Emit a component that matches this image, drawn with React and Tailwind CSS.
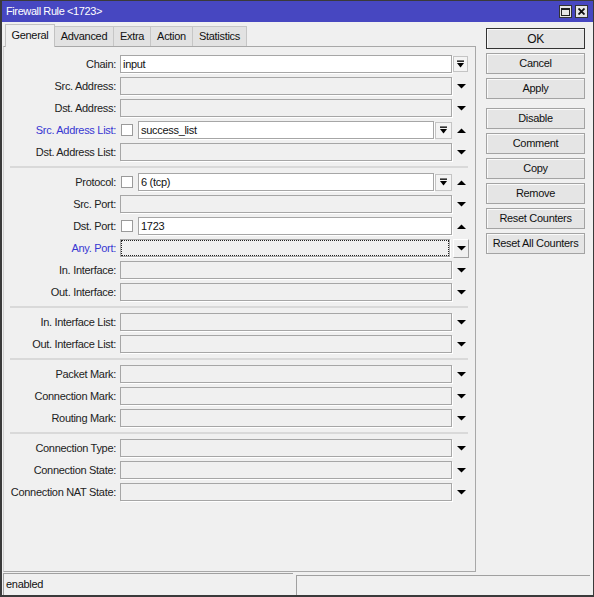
import React from 'react';

const rows = [
  { label: 'Chain:', kind: 'chain', value: 'input' },
  { label: 'Src. Address:' },
  { label: 'Dst. Address:' },
  { label: 'Src. Address List:', blue: true, kind: 'list', value: 'success_list' },
  { label: 'Dst. Address List:' },
  'sep',
  { label: 'Protocol:', kind: 'list', value: '6 (tcp)' },
  { label: 'Src. Port:' },
  { label: 'Dst. Port:', kind: 'check', value: '1723' },
  { label: 'Any. Port:', blue: true, kind: 'focus' },
  { label: 'In. Interface:' },
  { label: 'Out. Interface:' },
  'sep',
  { label: 'In. Interface List:' },
  { label: 'Out. Interface List:' },
  'sep',
  { label: 'Packet Mark:' },
  { label: 'Connection Mark:' },
  { label: 'Routing Mark:' },
  'sep',
  { label: 'Connection Type:' },
  { label: 'Connection State:' },
  { label: 'Connection NAT State:' },
];

const tabs = [
  { name: 'General', w: 'w-[50px]' },
  { name: 'Advanced', w: 'w-[59px]' },
  { name: 'Extra', w: 'w-[37px]' },
  { name: 'Action', w: 'w-[42px]' },
  { name: 'Statistics', w: 'w-[54px]' },
];

const buttons = ['OK', 'Cancel', 'Apply', null, 'Disable', 'Comment', 'Copy', 'Remove', 'Reset Counters', 'Reset All Counters'];

const Down = () => (
  <svg width="9" height="5" viewBox="0 0 9 5" className="block">
    <polygon points="0,0 9,0 4.5,4.5" fill="#000" />
  </svg>
);

const Up = () => (
  <svg width="9" height="5" viewBox="0 0 9 5" className="block">
    <polygon points="0,5 9,5 4.5,0.5" fill="#000" />
  </svg>
);

// small box with bar + down triangle
const ListBtn = ({ className }) => (
  <div className={`flex items-center justify-center bg-[#f4f4f4] border border-[#c4c4c4] ${className}`}>
    <svg width="7" height="8" viewBox="0 0 7 8" className="block">
      <rect x="0" y="0.5" width="7" height="1.3" fill="#000" />
      <polygon points="0,3 7,3 3.5,7.5" fill="#000" />
    </svg>
  </div>
);

const field = 'h-[18px] border border-[#a6a6a6] shadow-[1px_1px_0_#fff] flex items-center pl-[2px] text-[#111]';

const Row = ({ r }) => {
  const label = (
    <div className={`w-[113px] text-right pr-[1px] ${r.blue ? 'text-[#3737d2]' : 'text-[#222]'}`}>{r.label}</div>
  );
  if (r.kind === 'chain') {
    return (
      <div className="h-[22px] flex items-center">
        {label}
        <div className={`ml-[3px] w-[332px] bg-white ${field}`}>{r.value}</div>
        <ListBtn className="ml-[1px] w-[15px] h-[16px]" />
      </div>
    );
  }
  if (r.kind === 'list' || r.kind === 'check') {
    return (
      <div className="h-[22px] flex items-center">
        {label}
        <div className="ml-[4px] w-[12px] h-[12px] bg-white border border-[#9a9a9a]" />
        <div className={`ml-[5px] bg-white ${field} ${r.kind === 'list' ? 'w-[296px]' : 'w-[314px]'}`}>{r.value}</div>
        {r.kind === 'list' && <ListBtn className="ml-[1px] w-[17px] h-[17px]" />}
        <div className="ml-[5px]"><Up /></div>
      </div>
    );
  }
  if (r.kind === 'focus') {
    return (
      <div className="h-[22px] flex items-center">
        {label}
        <div className={`ml-[3px] w-[330px] bg-[#f0f0f0] ${field} outline-1 outline-dotted outline-[#222] -outline-offset-2`} />
        <div className="ml-[3px] w-[16px] h-[19px] flex items-center justify-center bg-[#f0f0f0] border border-t-white border-l-white border-r-[#a0a0a0] border-b-[#a0a0a0]">
          <Down />
        </div>
      </div>
    );
  }
  return (
    <div className="h-[22px] flex items-center">
      {label}
      <div className={`ml-[3px] w-[332px] bg-[#f0f0f0] ${field}`} />
      <div className="ml-[5px]"><Down /></div>
    </div>
  );
};

export default function App() {
  return (
    <div className="w-[594px] h-[597px] flex flex-col bg-[#f0f0f0] border-l-2 border-r border-t border-b-2 border-[#3a3a3a] font-['Liberation_Sans',Arial,sans-serif] text-[11px] tracking-[-0.3px] leading-none">
      {/* Title bar */}
      <div className="h-[21px] bg-[#4747c1] flex items-center justify-between pl-[4px] pr-[5px]">
        <span className="text-white text-[11px] tracking-[-0.4px]">Firewall Rule {'<1723>'}</span>
        <div className="flex gap-[3px]">
          <div className="w-[13px] h-[13px] bg-[#e6e6e6] border border-[#333] flex items-center justify-center">
            <div className="w-[9px] h-[8px] border border-t-2 border-[#222]" />
          </div>
          <div className="w-[13px] h-[13px] bg-[#e6e6e6] border border-[#333] flex items-center justify-center">
            <svg width="7" height="7" viewBox="0 0 7 7" className="block">
              <path d="M0.5 0.5L6.5 6.5M6.5 0.5L0.5 6.5" stroke="#111" strokeWidth="1.8" />
            </svg>
          </div>
        </div>
      </div>

      {/* Body */}
      <div className="flex-1 flex">
        <div className="w-[474px] flex flex-col">
          <div className="h-[24px] flex items-end pl-[3px]">
            {tabs.map((t, i) =>
              i === 0 ? (
                <div key={t.name} className={`${t.w} h-[23px] -mb-[1px] relative z-10 bg-[#f0f0f0] border border-b-0 border-[#c2c2c2] flex items-center justify-center text-[#111] pb-[1px]`}>
                  {t.name}
                </div>
              ) : (
                <div key={t.name} className={`${t.w} h-[20px] bg-[#e2e2e2] border border-b-0 border-l-0 border-[#c6c6c6] flex items-center justify-center text-[#111]`}>
                  {t.name}
                </div>
              )
            )}
          </div>
          <div className="ml-[1px] flex-1 border border-[#a8a8a8] border-l-[#d0d0d0] pt-[6px]">
            {rows.map((r, i) =>
              r === 'sep' ? (
                <div key={i} className="h-[8px] flex items-center pl-[6px]">
                  <div className="w-[458px] h-[2px] bg-[#d9d9d9]" />
                </div>
              ) : (
                <Row key={i} r={r} />
              )
            )}
          </div>
        </div>

        {/* Right buttons */}
        <div className="flex-1 pl-[10px] pt-[6px] flex flex-col gap-[4px]">
          {buttons.map((b, i) =>
            b === null ? (
              <div key={i} className="h-[1px]" />
            ) : (
              <div
                key={b}
                className={`w-[99px] h-[21px] flex items-center justify-center text-[#111] bg-[#e5e5e5] shadow-[inset_1px_1px_0_#fafafa] border ${b === 'OK' ? 'border-[#333] text-[12px]' : 'border-[#a3a3a3]'}`}
              >
                {b}
              </div>
            )
          )}
        </div>
      </div>

      {/* Status bar */}
      <div className="h-[23px] flex pt-[1px] pl-[1px] pr-[3px] gap-[3px]">
        <div className="w-[290px] border-t border-l border-[#a0a0a0] flex items-center pl-[2px] text-[#111]">enabled</div>
        <div className="flex-1 border-t border-l border-[#a0a0a0] mt-[2px]" />
      </div>
    </div>
  );
}
